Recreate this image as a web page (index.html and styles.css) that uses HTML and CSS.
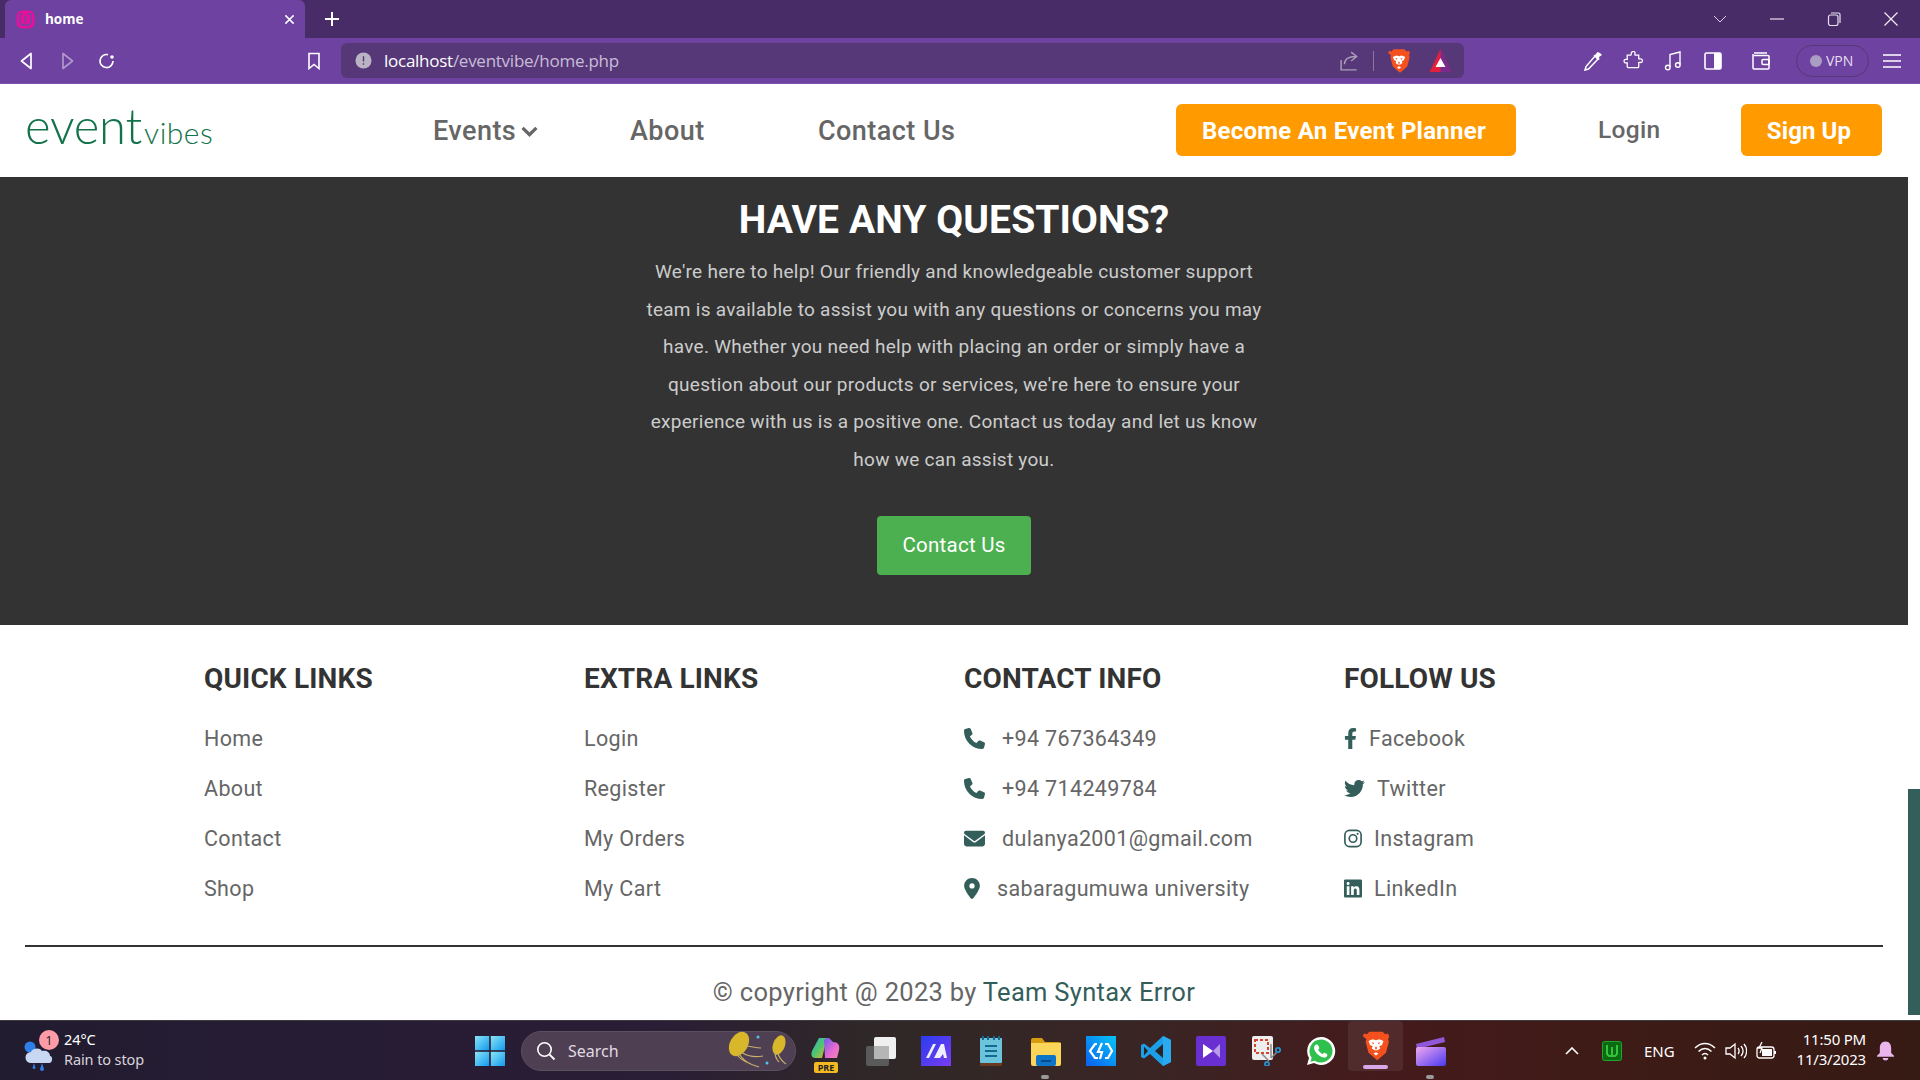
FILE: index.html
```html
<!DOCTYPE html>
<html lang="en">
<head>
<meta charset="utf-8">
<title>home</title>
<link rel="stylesheet" href="styles.css">
</head>
<body>
<svg class="defs" width="0" height="0" aria-hidden="true">
  <defs>
    <symbol id="i-phone" viewBox="0 0 512 512"><path d="M164.9 24.6c-7.7-18.6-28-28.5-47.4-23.2l-88 24C12.1 30.2 0 46 0 64C0 311.4 200.6 512 448 512c18 0 33.8-12.1 38.6-29.5l24-88c5.3-19.4-4.6-39.7-23.2-47.4l-96-40c-16.3-6.8-35.2-2.1-46.3 11.6L304.7 368C234.3 334.7 177.3 277.7 144 207.3L193.3 167c13.7-11.2 18.4-30 11.6-46.3l-40-96z"/></symbol>
    <symbol id="i-mail" viewBox="0 0 512 512"><path d="M48 64C21.5 64 0 85.5 0 112c0 15.1 7.1 29.3 19.2 38.4L236.8 313.6c11.4 8.5 27 8.5 38.4 0L492.8 150.4c12.1-9.1 19.2-23.3 19.2-38.4c0-26.5-21.5-48-48-48H48zM0 176V384c0 35.3 28.7 64 64 64H448c35.3 0 64-28.7 64-64V176L294.4 339.2c-22.8 17.1-54 17.1-76.8 0L0 176z"/></symbol>
    <symbol id="i-pin" viewBox="0 0 384 512"><path d="M215.7 499.2C267 435 384 279.4 384 192C384 86 298 0 192 0S0 86 0 192c0 87.4 117 243 168.3 307.2c12.3 15.3 35.1 15.3 47.4 0zM192 128a64 64 0 1 1 0 128 64 64 0 1 1 0-128z"/></symbol>
    <symbol id="i-fb" viewBox="0 0 320 512"><path d="M279.14 288l14.22-92.66h-88.91v-60.13c0-25.35 12.42-50.06 52.24-50.06h40.42V6.26S260.43 0 225.36 0c-73.22 0-121.08 44.38-121.08 124.72v70.62H22.89V288h81.39v224h100.17V288z"/></symbol>
    <symbol id="i-tw" viewBox="0 0 512 512"><path d="M459.37 151.716c.325 4.548.325 9.097.325 13.645 0 138.72-105.583 298.558-298.558 298.558-59.452 0-114.68-17.219-161.137-47.106 8.447.974 16.568 1.299 25.34 1.299 49.055 0 94.213-16.568 130.274-44.832-46.132-.975-84.792-31.188-98.112-72.772 6.498.974 12.995 1.624 19.818 1.624 9.421 0 18.843-1.3 27.614-3.573-48.081-9.747-84.143-51.98-84.143-102.985v-1.299c13.969 7.797 30.214 12.67 47.431 13.319-28.264-18.843-46.781-51.005-46.781-87.391 0-19.492 5.197-37.36 14.294-52.954 51.655 63.675 129.3 105.258 216.365 109.807-1.624-7.797-2.599-15.918-2.599-24.04 0-57.828 46.782-104.934 104.934-104.934 30.213 0 57.502 12.67 76.67 33.137 23.715-4.548 46.456-13.32 66.599-25.34-7.798 24.366-24.366 44.833-46.132 57.827 21.117-2.273 41.584-8.122 60.426-16.243-14.292 20.791-32.161 39.308-52.628 54.253z"/></symbol>
    <symbol id="i-ig" viewBox="0 0 24 24"><rect x="1.2" y="1.2" width="21.6" height="21.6" rx="6" fill="none" stroke="currentColor" stroke-width="2.2"/><circle cx="12" cy="12" r="5" fill="none" stroke="currentColor" stroke-width="2.2"/><circle cx="18.2" cy="5.8" r="1.4"/></symbol>
    <symbol id="i-li" viewBox="0 0 448 512"><path d="M416 32H31.9C14.3 32 0 46.5 0 64.3v383.4C0 465.5 14.3 480 31.9 480H416c17.6 0 32-14.5 32-32.3V64.3c0-17.8-14.4-32.3-32-32.3zM135.4 416H69V202.2h66.5V416zm-33.2-243c-21.3 0-38.5-17.3-38.5-38.5S80.9 96 102.2 96c21.2 0 38.5 17.3 38.5 38.5 0 21.3-17.2 38.5-38.5 38.5zm282.1 243h-66.4V312c0-24.8-.5-56.7-34.5-56.7-34.6 0-39.9 27-39.9 54.9V416h-66.4V202.2h63.7v29.2h.9c8.9-16.8 30.6-34.5 62.9-34.5 67.2 0 79.7 44.3 79.7 101.9V416z"/></symbol>
    <symbol id="i-brave" viewBox="0 0 32 36">
      <path fill="#f4511e" d="M8 1h16l3 3 3-1 2 3-1.500 4 1 3-3.500 13-7 6-3.500 3-3.500-3-7-6-3.500-13 1-3L0 6l2-3 3 1z"/>
      <path fill="#fff" d="M7 12l5-2 4 1 4-1 5 2-2 5-3 1 1 3-3 2h-4l-3-2 1-3-3-1zM13 27l3-1.500 3 1.500-3 2.500z"/>
      <path fill="#f4511e" d="M10.500 13.500l3.500 1-1.500 1.500zM21.500 13.500l-3.500 1 1.500 1.500zM15 19h2v3h-2z"/>
    </symbol>
  </defs>
</svg>

<div class="screen">
  <div class="tabstrip">
    <div class="tab">
      <svg class="favicon" viewBox="0 0 20 20"><rect x="0.5" y="0.5" width="19" height="19" rx="6" fill="#e6119a"/><path d="M4 4v9l2.500 3h7l2.500-3V4M10 6v8M4 4h3M13 4h3" fill="none" stroke="#7b3fa5" stroke-width="1.800"/></svg>
      <span class="tab-title">home</span>
      <svg class="tab-close" viewBox="0 0 12 12"><path d="M1.500 1.500l9 9M10.500 1.500l-9 9" stroke="#fff" stroke-width="1.600"/></svg>
    </div>
    <svg class="new-tab" viewBox="0 0 16 16"><path d="M8 1v14M1 8h14" stroke="#fff" stroke-width="2"/></svg>
    <div class="win-controls">
      <svg class="win-ic" viewBox="0 0 14 14"><path d="M1 4l6 6 6-6" fill="none" stroke="#d8cfe6" stroke-width="1"/></svg>
      <svg class="win-ic" viewBox="0 0 14 14"><path d="M0 7h14" stroke="#e8e2f0" stroke-width="1.200"/></svg>
      <svg class="win-ic" viewBox="0 0 14 14"><rect x="1.500" y="3" width="9.500" height="10.500" rx="2" fill="none" stroke="#e8e2f0" stroke-width="1.200"/><path d="M4 1h7.500a1.500 1.500 0 0 1 1.500 1.500V11" fill="none" stroke="#e8e2f0" stroke-width="1.200"/></svg>
      <svg class="win-ic" viewBox="0 0 14 14"><path d="M0.500 0.500l13 13M13.500 0.500l-13 13" stroke="#f2eef7" stroke-width="1.200"/></svg>
    </div>
  </div>

  <div class="toolbar">
    <div class="tb-nav">
      <svg class="tb-ic" viewBox="0 0 20 20"><path d="M14 2.500v15L4.500 10z" fill="none" stroke="#fff" stroke-width="1.700" stroke-linejoin="round"/></svg>
      <svg class="tb-ic dim" viewBox="0 0 20 20"><path d="M6 2.500v15l9.500-7.500z" fill="none" stroke="#fff" stroke-width="1.700" stroke-linejoin="round"/></svg>
      <svg class="tb-ic" viewBox="0 0 20 20"><path d="M16 10a6.500 6.500 0 1 1-5-6.300" fill="none" stroke="#fff" stroke-width="1.700"/><circle cx="15" cy="6" r="1.800" fill="#fff"/></svg>
    </div>
    <svg class="bookmark" viewBox="0 0 14 18"><path d="M2 1.500h10v15l-5-4-5 4z" fill="none" stroke="#fff" stroke-width="1.600"/></svg>
    <div class="address">
      <svg class="info" viewBox="0 0 18 18"><circle cx="9" cy="9" r="8.500" fill="#b9b3c4"/><path d="M9 4.500v5.500M9 12v1.500" stroke="#563878" stroke-width="1.500"/></svg>
      <span class="url"><span class="url-host">localhost</span>/eventvibe/home.php</span>
      <svg class="share" viewBox="0 0 18 18"><path d="M1 8v9h14M4 12c0-5 4-7 10-7M10 1l5 4-5 4" fill="none" stroke="#a99dbb" stroke-width="1.300"/></svg>
      <span class="addr-sep"></span>
      <svg class="shield" viewBox="0 0 32 36"><use href="#i-brave"/></svg>
      <svg class="rewards" viewBox="0 0 22 24"><path d="M11 0L22 23H0z" fill="#e0203c"/><path d="M11 0L22 23H11z" fill="#7a2a8c"/><path d="M11 9l5 9H6z" fill="#fff"/></svg>
    </div>
    <div class="tb-tools">
      <svg class="tool" viewBox="0 0 20 20"><path d="M12 5l3 3-9.500 10-3.500 1 1-3.500z" fill="none" stroke="#fff" stroke-width="1.500"/><path d="M10.500 4.500l2-1 2-2.500 2.500 1L19 4l-3 2 .5 2.500-1.500.5z" fill="#fff"/></svg>
      <svg class="tool" viewBox="0 0 20 20"><path d="M8 2.500a2 2 0 0 1 4 0c0 1-.5 1.500 0 2h4v4c.5.500 1 0 2 0a2 2 0 0 1 0 4c-1 0-1.500-.500-2 0v4.500c0 .500-.500 1-1 1H4.500c-.5 0-1-.5-1-1v-4c.5-.5-1 0-1.500 0a2 2 0 0 1 0-4c.5 0 2 .500 1.500 0v-4.500h4c.5-.5 0-1 .5-2z" fill="none" stroke="#fff" stroke-width="1.400" transform="translate(1 0) scale(.92)"/></svg>
      <svg class="tool" viewBox="0 0 20 20"><path d="M7 16V3.500L17 1v12.500" fill="none" stroke="#fff" stroke-width="1.400"/><circle cx="4.800" cy="16.500" r="2.300" fill="none" stroke="#fff" stroke-width="1.400"/><circle cx="14.800" cy="14" r="2.300" fill="none" stroke="#fff" stroke-width="1.400"/></svg>
      <svg class="tool" viewBox="0 0 20 20"><rect x="2" y="2" width="16" height="16" rx="1.500" fill="none" stroke="#fff" stroke-width="1.600"/><rect x="11" y="2" width="7" height="16" fill="#fff"/></svg>
      <svg class="tool wallet" viewBox="0 0 20 20"><path d="M3 2h13M3 4.500h14a1 1 0 0 1 1 1V17a1 1 0 0 1-1 1H3a1 1 0 0 1-1-1V3" fill="none" stroke="#fff" stroke-width="1.500"/><rect x="11" y="8.500" width="7" height="5" rx="1" fill="none" stroke="#fff" stroke-width="1.500"/></svg>
      <div class="vpn"><span class="vpn-dot"></span><span>VPN</span></div>
      <svg class="menu" viewBox="0 0 18 14"><path d="M0 1h18M0 7h18M0 13h18" stroke="#fff" stroke-width="1.400"/></svg>
    </div>
  </div>

  <header class="nav">
    <a class="logo"><span class="logo-a">event</span><span class="logo-b">vibes</span></a>
    <nav class="nav-links">
      <a class="nav-link events">Events<svg class="chev" viewBox="0 0 16 10"><path d="M1.500 1.500L8 8l6.500-6.500" fill="none" stroke="#666" stroke-width="3"/></svg></a>
      <a class="nav-link about">About</a>
      <a class="nav-link contact">Contact Us</a>
    </nav>
    <a class="cta planner">Become An Event Planner</a>
    <a class="login">Login</a>
    <a class="cta signup">Sign Up</a>
  </header>

  <div class="page">
    <main class="content">
      <section class="hero">
        <h2 class="hero-title">HAVE ANY QUESTIONS?</h2>
        <p class="hero-text">We're here to help! Our friendly and knowledgeable customer support<br>team is available to assist you with any questions or concerns you may<br>have. Whether you need help with placing an order or simply have a<br>question about our products or services, we're here to ensure your<br>experience with us is a positive one. Contact us today and let us know<br>how we can assist you.</p>
        <a class="hero-btn">Contact Us</a>
      </section>
      <footer class="footer">
        <div class="cols">
          <div class="col">
            <h3 class="col-title">QUICK LINKS</h3>
            <a class="flink">Home</a><a class="flink">About</a><a class="flink">Contact</a><a class="flink">Shop</a>
          </div>
          <div class="col">
            <h3 class="col-title">EXTRA LINKS</h3>
            <a class="flink">Login</a><a class="flink">Register</a><a class="flink">My Orders</a><a class="flink">My Cart</a>
          </div>
          <div class="col">
            <h3 class="col-title">CONTACT INFO</h3>
            <a class="flink wide"><svg class="fi fi-20"><use href="#i-phone"/></svg>+94 767364349</a>
            <a class="flink wide"><svg class="fi fi-20"><use href="#i-phone"/></svg>+94 714249784</a>
            <a class="flink wide"><svg class="fi fi-20"><use href="#i-mail"/></svg>dulanya2001@gmail.com</a>
            <a class="flink wide"><svg class="fi fi-pin"><use href="#i-pin"/></svg>sabaragumuwa university</a>
          </div>
          <div class="col">
            <h3 class="col-title">FOLLOW US</h3>
            <a class="flink"><svg class="fi fi-fb"><use href="#i-fb"/></svg>Facebook</a>
            <a class="flink"><svg class="fi fi-20"><use href="#i-tw"/></svg>Twitter</a>
            <a class="flink"><svg class="fi fi-18"><use href="#i-ig"/></svg>Instagram</a>
            <a class="flink"><svg class="fi fi-18"><use href="#i-li"/></svg>LinkedIn</a>
          </div>
        </div>
        <div class="rule"></div>
        <p class="copy">© copyright @ 2023 by <span class="copy-team">Team Syntax Error</span></p>
      </footer>
    </main>
    <div class="scrollbar"><div class="thumb"></div></div>
  </div>

  <div class="taskbar">
    <div class="weather">
      <div class="weather-art">
        <svg class="weather-ic" viewBox="0 0 34 36"><circle cx="6" cy="10" r="5.500" fill="#2f7fe8"/><path d="M7 26a5.500 5.500 0 0 1 0-11c1-4 9-5 11-1 4-1 8 1 8 5 3 0 3 7-1 7z" fill="#c9d8f2"/><path d="M10 26l-1.500 5a1.700 1.700 0 0 0 3 0zM18 26l-2 6a2 2 0 0 0 4 0z" fill="#2f7fe8"/></svg>
        <span class="badge">1</span>
      </div>
      <div class="weather-text"><span class="temp">24°C</span><span class="cond">Rain to stop</span></div>
    </div>
    <svg class="start" viewBox="0 0 30 30">
      <defs><linearGradient id="w" x1="0" y1="0" x2="1" y2="1"><stop offset="0" stop-color="#8de4f5"/><stop offset="1" stop-color="#0f9bef"/></linearGradient></defs>
      <rect width="14.200" height="14.200" fill="url(#w)"/><rect x="15.800" width="14.200" height="14.200" fill="url(#w)"/><rect y="15.800" width="14.200" height="14.200" fill="url(#w)"/><rect x="15.800" y="15.800" width="14.200" height="14.200" fill="url(#w)"/>
    </svg>
    <div class="search">
      <svg class="search-ic" viewBox="0 0 20 20"><circle cx="8.500" cy="8.500" r="6.700" fill="none" stroke="#fff" stroke-width="1.600"/><path d="M13.500 13.500l5 5" stroke="#fff" stroke-width="1.800"/></svg>
      <span class="search-text">Search</span>
      <svg class="jelly" viewBox="0 0 66 42"><ellipse cx="14" cy="14" rx="9" ry="13" transform="rotate(30 14 14)" fill="#d8b82a"/><path d="M16 22c6 4 12 6 22 4M12 25c4 5 12 9 22 12M20 16c6 0 10 2 16 2M14 24c3 4 6 8 12 10" fill="none" stroke="#c9b06a" stroke-width="1.200"/><ellipse cx="54" cy="15" rx="6" ry="10" transform="rotate(20 54 15)" fill="#d8b82a"/><path d="M53 24c2 5 5 8 8 10M50 22c0 4 2 8 4 10" fill="none" stroke="#c9b06a" stroke-width="1.200"/><circle cx="33" cy="7" r="1.500" fill="#52c4e8"/><circle cx="42" cy="33" r="1.500" fill="#52c4e8"/></svg>
    </div>
    <div class="apps">
      <div class="app"><svg class="app-ic" viewBox="0 0 30 30"><defs><linearGradient id="c1" x1="0" y1="0" x2="1" y2="1"><stop offset="0" stop-color="#2bb6d8"/><stop offset=".5" stop-color="#4fc66c"/><stop offset="1" stop-color="#f0b030"/></linearGradient><linearGradient id="c2" x1="0" y1="0" x2="1" y2="1"><stop offset="0" stop-color="#6a5cf0"/><stop offset=".6" stop-color="#e86ad0"/><stop offset="1" stop-color="#f08ab0"/></linearGradient></defs><path d="M8 2h8l-5 20H4C0 22 0 18 1 15z" fill="url(#c1)"/><path d="M13 4c2-2 3-2 5-2l4 4c5 0 7 3 6 8l-2 8H14z" fill="url(#c2)"/></svg><span class="pre">PRE</span></div>
      <div class="app"><svg class="app-ic" viewBox="0 0 30 30"><rect x="0" y="10" width="23" height="20" rx="2" fill="#5a5a5a"/><rect x="8" y="1" width="22" height="22" rx="2" fill="#f0f0f0"/><rect x="8" y="10" width="15" height="13" fill="#b5b5b5"/></svg></div>
      <div class="app"><svg class="app-ic" viewBox="0 0 30 30"><defs><linearGradient id="m" x1="0" y1="0" x2="1" y2="1"><stop offset="0" stop-color="#2a3cf0"/><stop offset="1" stop-color="#7a3cf0"/></linearGradient></defs><rect width="30" height="30" fill="url(#m)"/><path d="M5 22L12 8h3L8 22zM13 22L20 8h3l3 14h-3l-1-4-3 4z" fill="#eef"/></svg></div>
      <div class="app"><svg class="app-ic" viewBox="0 0 30 30"><rect x="4" y="3" width="22" height="27" rx="1" fill="#6a3a20"/><rect x="4" y="2" width="22" height="25" rx="1" fill="#6cc4dc"/><path d="M9 10h12M9 15h12M9 20h12" stroke="#146a90" stroke-width="2"/><path d="M7 0v4M12 0v4M18 0v4M23 0v4" stroke="#146a90" stroke-width="2"/></svg></div>
      <div class="app open"><svg class="app-ic" viewBox="0 0 30 30"><path d="M0 4a2 2 0 0 1 2-2h9l3 4h14a2 2 0 0 1 2 2v2H0z" fill="#d89c10"/><path d="M0 7h30v21a2 2 0 0 1-2 2H2a2 2 0 0 1-2-2z" fill="#fbd65a"/><rect x="5" y="19" width="20" height="11" rx="2" fill="#0e74c8"/><path d="M10 25h10" stroke="#063a78" stroke-width="1.500"/></svg></div>
      <div class="app"><svg class="app-ic" viewBox="0 0 30 30"><defs><linearGradient id="g" x1="0" y1="1" x2="1" y2="0"><stop offset="0" stop-color="#0a5ff0"/><stop offset="1" stop-color="#06c4f8"/></linearGradient></defs><rect width="30" height="30" fill="url(#g)"/><path d="M11 8H9l-5 7 5 7h3M19 8h3l4 7-4 7h-3M16 7l-4 9h4l-2 7" fill="none" stroke="#fff" stroke-width="2.200"/></svg></div>
      <div class="app"><svg class="app-ic" viewBox="0 0 30 30"><path d="M22 0l8 4v22l-8 4-13-12-6 4.500L0 21v-12l3-1.500L9 12z" fill="#1a9fe8"/><path d="M22 8l-8 7 8 7z" fill="#2c2424"/><path d="M3 10.500L7 15l-4 4.500z" fill="#2c2424"/><path d="M22 0v30l8-4V4z" fill="#2aaaf0"/></svg></div>
      <div class="app"><svg class="app-ic" viewBox="0 0 30 30"><rect width="30" height="30" rx="2" fill="#6a2fd0"/><path d="M7 8l10 7-10 7z" fill="#fff"/><path d="M24 8l-7 7 7 7z" fill="#b79ae8"/></svg></div>
      <div class="app"><svg class="app-ic" viewBox="0 0 30 30"><rect x="1" y="0" width="21" height="24" rx="2" fill="#eee"/><rect x="4" y="4" width="13" height="13" fill="none" stroke="#d8432e" stroke-width="2" stroke-dasharray="3 2"/><path d="M11 18l7 7M20 8v14M20 22l6-6" stroke="#8c8c8c" stroke-width="1.500" fill="none"/><circle cx="27" cy="14" r="2.200" fill="none" stroke="#2a8fc8" stroke-width="1.800"/><circle cx="16" cy="28" r="2" fill="none" stroke="#2a8fc8" stroke-width="1.800"/></svg></div>
      <div class="app"><svg class="app-ic" viewBox="0 0 30 30"><path d="M15 1a14 14 0 1 1-7 26l-7 2 2-7A14 14 0 0 1 15 1z" fill="#fff"/><path d="M15 3.500a11.500 11.500 0 1 1-6.200 21.200l-4.300 1.100 1.200-4.100A11.500 11.500 0 0 1 15 3.500z" fill="#2fc04e"/><path d="M10.500 8.500c1 0 1.500.2 2 1.500l.8 2c.2.600-.8 1.500-1 2 .8 1.800 2.500 3.200 4.200 4 .6-.4 1.400-1.500 2-1.300l2.500 1.200c.6.400.4 2-.4 2.800-1.800 1.500-4 .8-6.300-.4-2.500-1.300-4.500-3.500-5.700-6-.8-2-.6-4 .6-5.200z" fill="#fff"/></svg></div>
      <div class="app active"><svg class="app-ic" viewBox="0 0 32 36"><use href="#i-brave"/></svg></div>
      <div class="app open"><svg class="app-ic" viewBox="0 0 30 30"><defs><linearGradient id="cl" x1="0" y1="0" x2="1" y2="1"><stop offset="0" stop-color="#f0a8f0"/><stop offset="1" stop-color="#4a38f0"/></linearGradient></defs><path d="M0 8L28 1l1 5L1 13z" fill="#9058d8"/><rect y="11" width="30" height="19" rx="2" fill="url(#cl)"/></svg></div>
    </div>
    <div class="tray">
      <svg class="tray-chev" viewBox="0 0 14 8"><path d="M1 7l6-6 6 6" fill="none" stroke="#fff" stroke-width="1.600"/></svg>
      <svg class="tray-wamp" viewBox="0 0 20 20"><rect x="0.500" y="0.500" width="19" height="19" rx="2" fill="#0a6a12" stroke="#1da828"/><path d="M5 4v9l2 2h6l2-2V4M10 6v8" fill="none" stroke="#37c23e" stroke-width="2"/></svg>
      <span class="lang">ENG</span>
      <svg class="tray-ic" viewBox="0 0 22 18"><path d="M1 6c6-6 14-6 20 0M4.500 9.500c4-4 9-4 13 0M8 13c2-2 4-2 6 0" fill="none" stroke="#fff" stroke-width="1.400"/><circle cx="11" cy="16" r="1.500" fill="#fff"/></svg>
      <svg class="tray-ic" viewBox="0 0 22 18"><path d="M1 6h4l5-4v14l-5-4H1z" fill="none" stroke="#fff" stroke-width="1.300"/><path d="M13 6c1.500 2 1.500 4 0 6M16 4c2.500 3 2.500 7 0 10M19 2c3.500 4 3.500 10 0 14" fill="none" stroke="#fff" stroke-width="1.300"/></svg>
      <svg class="tray-ic" viewBox="0 0 22 18"><rect x="1" y="5" width="17" height="11" rx="2.500" fill="none" stroke="#fff" stroke-width="1.300"/><rect x="6" y="7" width="10" height="7" fill="#fff"/><path d="M19 9v3" stroke="#fff" stroke-width="2"/><path d="M6 0L3 6h3L4 11" fill="none" stroke="#fff" stroke-width="1.300"/></svg>
      <div class="clock"><span>11:50 PM</span><span>11/3/2023</span></div>
      <svg class="bell" viewBox="0 0 18 20"><path d="M9 0c4 0 6 3 6 7v5l3 3v1H0v-1l3-3V7c0-4 2-7 6-7z" fill="#eab4ec"/><path d="M6 17.500h6a3 2.500 0 0 1-6 0z" fill="#eab4ec"/></svg>
    </div>
  </div>
</div>
</body>
</html>
```

FILE: styles.css
```css
* { box-sizing: border-box; margin: 0; padding: 0; }
html, body { width: 1920px; height: 1080px; overflow: hidden; background: #fff; }
body { font-family: Roboto, "Liberation Sans", sans-serif; }
.defs { position: absolute; }
svg { display: block; flex: none; }
a { color: inherit; text-decoration: none; }

.screen { width: 1920px; height: 1080px; display: flex; flex-direction: column; overflow: hidden; }

/* browser tab strip */
.tabstrip { height: 38px; background: #472c68; display: flex; align-items: center; padding-left: 5px; flex: none; }
.tab { width: 300px; height: 38px; background: #6d42a0; border-radius: 6px 6px 0 0; display: flex; align-items: center; padding: 0 7px 0 11px; }
.favicon { width: 19px; height: 19px; }
.tab-title { margin-left: 10px; color: #fff; font: 700 13.5px "Open Sans", sans-serif; flex: 1; }
.tab-close { width: 11px; height: 11px; margin-right: 3px; }
.new-tab { width: 16px; height: 16px; margin-left: 19px; }
.win-controls { margin-left: auto; display: flex; align-items: center; padding-right: 22px; gap: 43px; }
.win-ic { width: 14px; height: 14px; }

/* browser toolbar */
.toolbar { height: 46px; background: #6d42a0; display: flex; align-items: center; padding-left: 7px; flex: none; border-bottom: 1px solid #7d4fb0; }
.tb-nav { display: flex; width: 300px; }
.tb-ic { width: 20px; height: 20px; margin: 0 10px; }
.tb-ic.dim { opacity: .45; }
.bookmark { width: 14px; height: 18px; }
.address { margin-left: 20px; width: 1123px; height: 35px; background: #563878; border-radius: 6px; display: flex; align-items: center; padding-left: 14px; }
.info { width: 17px; height: 17px; }
.url { margin-left: 12px; font: 400 17px "Open Sans", sans-serif; letter-spacing: -.26px; color: #c8bdd8; flex: 1; }
.url-host { color: #fff; }
.share { width: 20px; height: 20px; margin-right: -3px; }
.addr-sep { width: 1px; height: 20px; background: #8a77a4; margin-left: 16px; }
.shield { width: 22px; height: 26px; margin-left: 14px; }
.rewards { width: 23px; height: 24px; margin: 0 12px 0 19px; }
.tb-tools { margin-left: 119px; display: flex; align-items: center; }
.tool { width: 20px; height: 20px; margin-right: 20px; }
.tool.wallet { margin-left: 8px; margin-right: 25px; }
.vpn { width: 73px; height: 32px; border: 1px solid #563878; border-radius: 16px; display: flex; align-items: center; padding-left: 13px; gap: 4px; color: #e6dff0; font: 400 14px "Open Sans", sans-serif; }
.vpn-dot { width: 12px; height: 12px; border-radius: 50%; background: #a99dc4; }
.menu { width: 18px; height: 14px; margin-left: 14px; }

/* site nav */
.nav { height: 93px; flex: none; background: #fff; display: flex; align-items: center; padding: 0 0 1px 25px; }
.logo { display: flex; align-items: baseline; color: #12734a; font-family: Lato, sans-serif; font-weight: 300; width: 408px; padding-bottom: 11px; }
.logo-a { font-size: 49px; letter-spacing: -.2px; }
.logo-b { font-size: 30px; margin-left: 2px; letter-spacing: .5px; }
.nav-links { display: flex; align-items: center; width: 743px; padding-top: 2px; }
.nav-link { font-size: 27px; font-weight: 500; color: #666; letter-spacing: .45px; display: flex; align-items: center; }
.events { width: 197px; }
.about { width: 188px; }
.chev { width: 17px; height: 11px; margin-left: 5px; }
.cta { background: #ff9a00; color: #fff; border-radius: 6px; height: 52px; display: flex; align-items: center; justify-content: center; font-size: 24px; font-weight: 700; letter-spacing: .25px; padding-top: 2px; }
.planner { width: 340px; padding-right: 4px; }
.login { width: 82px; margin-left: 82px; font-size: 24.5px; font-weight: 500; color: #666; margin-bottom: 1px; letter-spacing: .3px; }
.signup { width: 141px; margin-left: 61px; letter-spacing: .1px; padding-right: 5px; }

/* page */
.page { flex: 1; min-height: 0; display: flex; }
.content { flex: 1; min-width: 0; display: flex; flex-direction: column; }
.scrollbar { width: 12px; flex: none; }
.thumb { height: 226px; margin-top: 612px; background: #345e5a; }

.hero { height: 448px; flex: none; background: #333; text-align: center; padding-top: 21px; }
.hero-title { color: #fff; font-size: 39px; line-height: 44px; font-weight: 700; letter-spacing: .1px; }
.hero-text { margin-top: 11px; color: #ccc; font-size: 19px; line-height: 37.5px; letter-spacing: .27px; }
.hero-btn { display: block; width: 154px; height: 59px; margin: 38px auto 0; background: #4caf50; color: #fff; border-radius: 4px; font-size: 20.5px; line-height: 59px; letter-spacing: .25px; }

/* footer */
.footer { flex: 1; background: #fff; padding: 36px 25px 0; }
.cols { display: grid; grid-template-columns: repeat(4, 350px); column-gap: 30px; padding-left: 179px; }
.col { display: flex; flex-direction: column; }
.col-title { font-size: 28px; line-height: 36px; font-weight: 700; color: #333; margin-bottom: 16px; letter-spacing: .15px; }
.flink { height: 50px; display: flex; align-items: center; gap: 12px; font-size: 21.5px; color: #666; letter-spacing: .35px; }
.flink.wide { gap: 17px; }
.fi { color: #345e5a; fill: #345e5a; height: 21px; }
.fi-20 { width: 21px; }
.fi-18 { width: 18px; }
.fi-fb { width: 13px; }
.fi-pin { width: 16px; }
.rule { height: 2px; background: #333; margin: 32px 0 0; width: 1858px; }
.copy { margin-top: 25px; text-align: center; font-size: 25.5px; line-height: 40px; color: #666; letter-spacing: .3px; }
.copy-team { color: #345e5a; }

/* windows taskbar */
.taskbar { height: 60px; flex: none; display: flex; align-items: center; border-top: 1px solid #3d3a42; background: linear-gradient(90deg, #221c30 0%, #2a1d36 34%, #2f2828 45%, #3a2524 60%, #451a1c 72%, #3d1b16 85%, #361a14 100%); }
.weather { width: 475px; flex: none; display: flex; align-items: center; padding-left: 24px; }
.weather-art { width: 40px; height: 46px; position: relative; }
.weather-ic { width: 34px; height: 36px; margin-top: 9px; }
.badge { position: absolute; left: 15px; top: 2px; width: 20px; height: 20px; border-radius: 50%; background: #ff9aa8; color: #222; font: 400 13px/20px "Open Sans", sans-serif; text-align: center; }
.weather-text { margin-bottom: 4px; display: flex; flex-direction: column; color: #fff; font: 400 14.5px/20px "Noto Sans", sans-serif; letter-spacing: -.1px; }
.cond { color: #d8d4dc; }
.start { width: 30px; height: 30px; }
.search { width: 275px; height: 40px; margin-left: 16px; border-radius: 20px; background: #4e3f53; border: 1px solid #5c4f60; display: flex; align-items: center; padding-left: 14px; }
.search-ic { width: 20px; height: 20px; }
.search-text { margin-left: 12px; color: #e0dbe2; font: 400 16px "Noto Sans", sans-serif; flex: 1; }
.jelly { width: 66px; height: 42px; margin-right: 4px; }
.apps { display: flex; margin-left: 2px; }
.app { width: 55px; height: 60px; display: flex; align-items: center; justify-content: center; position: relative; }
.app-ic { width: 30px; height: 30px; }
.app.open::after { content: ""; position: absolute; left: 23px; bottom: 2px; width: 8px; height: 4px; border-radius: 2px; background: #9a9a9a; }
.app.active { background: #ffffff12; border-radius: 4px; height: 50px; }
.app.active::after { content: ""; position: absolute; left: 15px; bottom: 2px; width: 25px; height: 4px; border-radius: 2px; background: #d9a6e8; }
.pre { position: absolute; left: 16px; bottom: 8px; width: 24px; height: 11px; background: #f4b820; border-radius: 2px; color: #222; font: 700 9px/11px "Open Sans", sans-serif; text-align: center; }
.tray { display: flex; align-items: center; margin-left: 107px; color: #fff; }
.tray-chev { width: 14px; height: 8px; }
.tray-wamp { width: 20px; height: 20px; margin-left: 23px; }
.lang { margin-left: 22px; font: 400 15px "Noto Sans", sans-serif; width: 32px; }
.tray-ic { width: 22px; height: 18px; margin-right: 9px; }
.lang + .tray-ic { margin-left: 18px; }
.clock { width: 79px; display: flex; flex-direction: column; align-items: flex-end; font: 400 15px/20px "Noto Sans", sans-serif; letter-spacing: -.2px; margin-bottom: 3px; }
.bell { width: 17px; height: 20px; margin-left: 11px; }
```
